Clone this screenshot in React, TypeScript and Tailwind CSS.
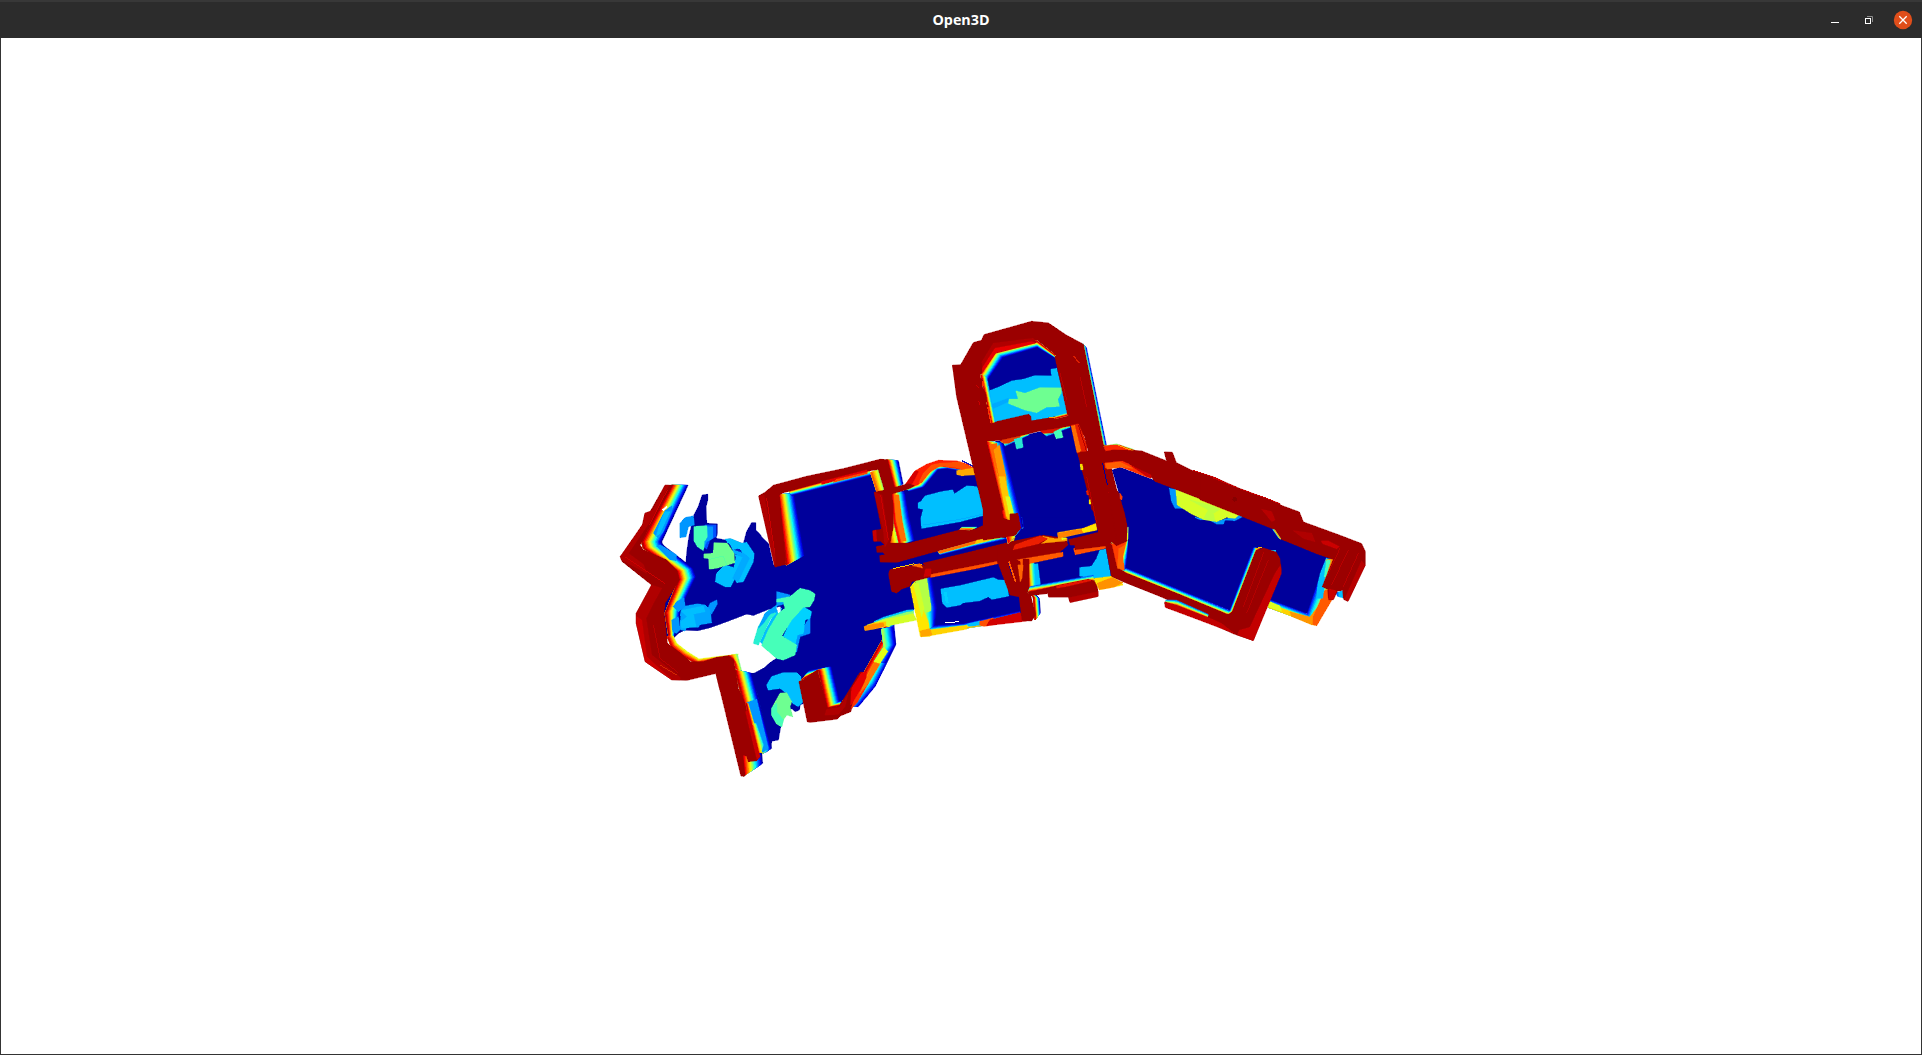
import type { ReactNode } from 'react';

type Pt = [number, number];
const parse = (s: string): Pt[] => s.trim().split(/\s+/).map((p) => p.split(',').map(Number) as Pt);

const clamp = (v: number) => Math.max(0, Math.min(1, v));
const jet = (v: number) => {
  const c = [3, 2, 1].map((k) => Math.round(255 * clamp(1.5 - Math.abs(4 * v - k))));
  return `rgb(${c.join(',')})`;
};

const RED = '#9b0000';
const MID = '#b00000';
const LIT = '#cb0000';
const NAVY = '#00009b';
const SKY = '#00bfff';
const AZURE = '#0096ff';
const AQUA = '#46ffb9';
const MINT = '#6eff91';

/** Filled region of the point cloud. */
const P = ({ c = RED, p }: { c?: string; p: string }) => (
  <polygon fill={c} stroke={c} strokeWidth={2} strokeLinejoin="round" points={p} />
);

/** Thin streak between voxel rows. */
const L = ({ c = LIT, p, w = 3 }: { c?: string; p: string; w?: number }) => (
  <polyline fill="none" stroke={c} strokeWidth={w} points={p} />
);

/** Height gradient swept from polyline a to polyline b. */
const Ramp = ({ a, b, from = 0.95, to = 0.03, n = 14 }: { a: string; b: string; from?: number; to?: number; n?: number }) => {
  const A = parse(a);
  const B = parse(b);
  return (
    <g strokeWidth={2} strokeLinejoin="round">
      {Array.from({ length: n }, (_, i) => {
        const t = 1 - i / n;
        const edge = A.map(([x, y], k) => [x + (B[k][0] - x) * t, y + (B[k][1] - y) * t]).reverse();
        const pts = [...A, ...edge].map((q) => q.join(',')).join(' ');
        const c = jet(from + (to - from) * ((n - 1 - i) / (n - 1)));
        return <polygon key={i} fill={c} stroke={c} points={pts} />;
      })}
    </g>
  );
};

const Tile = ({ x, y, children }: { x: number; y: number; children: ReactNode }) => (
  <g transform={`translate(${x} ${y}) scale(0.33333)`}>{children}</g>
);

const Cloud = () => (
  <svg className="block h-full w-full" viewBox="1 38 1920 1016" shapeRendering="crispEdges">
    {/* open floor */}
    <Tile x={740} y={440}>
      <P c={NAVY} p="-162,375 -160,340 -153,290 -138,225 -125,200 -113,165 -97,163 -97,180 -102,200 -100,250 -68,252 -68,280 -72,295 -45,300 -30,297 10,312 20,275 35,248 47,248 47,270 58,280 66,292 85,310 100,375 190,345 150,160 390,105 410,110 430,320 600,330 600,400 520,510 440,530 400,560 460,570 467,610 430,690 380,770 300,790 200,785 180,795 178,810 165,815 155,805 130,835 122,860 115,900 95,903 93,925 80,935 60,930 -10,705 40,700 110,655 60,560 -250,600 -220,420" />
    </Tile>
    <Tile x={960} y={470}>
      <P c={NAVY} p="-190,75 -150,50 -110,35 -65,-8 -10,-10 40,5 55,20 40,-60 150,-80 350,-100 450,100 600,60 600,335 455,315 415,340 210,365 215,432 -85,478 -140,340 -245,270" />
    </Tile>

    {/* west bay */}
    <Tile x={610} y={470}>
      <P c="#ffffff" p="187,509 205,492 225,482 262,484 300,475 350,457 410,434 430,438 475,420 488,418 495,430 440,525 458,533 480,550 495,562 465,590 435,607 420,608 418,613 395,615 385,560 340,560 260,575 190,530" />
      <P c="#00bfff" p="498,425 515,415 500,460 460,525 450,515 480,455" />
      <P c={AZURE} p="210,160 225,143 250,138 253,165 235,170 228,200 210,203" />
      <P c="#0050ff" p="285,165 318,165 318,200 300,210 290,237 280,230" />
      <P c={AZURE} p="285,170 308,170 308,205 290,215 280,238 270,225" />
      <P c={AQUA} p="252,170 290,167 292,200 283,215 280,242 262,230 252,212" />
      <P c={SKY} p="345,208 362,206 395,220 410,217 432,250 430,275 400,335 380,338 375,325 362,350 345,350 316,335 320,310 345,285 372,293 378,262 362,225" />
      <P c="#0a1cc0" p="372,240 390,236 398,256 372,252" />
      <P c="#00aaff" p="384,335 420,262 400,250 370,240 366,246 398,262 368,325" />
      <L c={SKY} p="352,212 400,238 422,262" w={10} />
      <P c={MINT} p="312,218 352,220 372,250 374,278 345,287 318,295 298,297 296,266 282,264 282,252 310,250" />
      <L c="#5aff9f" p="300,268 340,258 350,285" />
      <P c={AZURE} p="300,400 320,390 322,402 305,432 290,425" />
      <P c="#00a5ff" p="205,412 262,402 285,405 300,420 305,458 270,464 265,472 230,470 225,483 210,478 212,440" />
      <P c={SKY} p="212,422 280,408 285,425 250,432 258,470 215,475 212,455 232,440" />
      <P c={AZURE} p="500,365 540,375 530,400 500,408" />
      <P c={AZURE} p="530,520 575,480 600,440 600,490 570,500 560,545 545,550" />
      <P c="#00d2ff" p="520,500 545,445 580,410 605,425 600,445 585,450 580,490 562,495 555,525" />
      <P c={AQUA} p="540,380 570,355 600,362 615,372 612,390 600,410 580,412 545,450 515,498 560,525 555,555 520,570 500,565 455,527 475,480 505,430 525,415 520,395 500,396 500,388" />
      <P c="#28f0d2" p="430,520 445,470 475,420 498,430 480,450 445,525" />
      <P c="#00a5ff" p="445,475 465,430 500,405 500,425 480,432 460,460" />
      <P c="#ffffff" p="500,413 511,411 511,424 505,428" />

      <Ramp a="185,46 95,215 100,235 200,305 205,330 165,430 180,520" b="234,46 155,216 160,226 250,295 259,320 215,410 190,505" />
      <P c={AZURE} p="165,122 185,108 185,125 160,185 145,205 130,190" />
      <P c="#00bfff" p="150,160 165,125 180,125 150,190 138,200" />
      <P c="#ffffff" p="157,118 170,109 171,113 160,122" />
      <P c={AZURE} p="140,228 152,225 200,255 198,272 178,268" />
      <P c={AZURE} p="200,395 222,383 225,410 205,425 190,410" />
      <P c={AZURE} p="185,450 205,440 210,480 200,490 188,485" />
      <Ramp a="172,500 185,532 215,557 262,582 320,568 370,566" b="190,498 200,520 232,545 267,567 330,559 385,553" from={0.92} to={0.6} n={5} />
      <P p="165,46 187,46 105,195 90,225 100,240 170,270 200,300 208,330 165,400 162,430 172,520 215,552 240,575 280,575 320,562 365,562 340,660 330,660 318,610 230,631 185,629 106,575 79,460 79,430 125,345 36,274 31,260 96,170 105,130 120,126" />
      <P c={MID} p="165,46 176,46 130,140 55,250 100,283 110,310 36,270 31,260 100,160 105,130 130,120" />
      <P c={MID} p="125,345 155,355 130,400 108,445 125,555 210,622 210,629 185,629 106,575 79,460 79,430" />
      <P c={LIT} p="80,440 95,450 110,560 140,588 185,628 107,575 80,460" />
      <L p="172,60 118,165" />
      <L p="45,260 165,340" />
      <L p="130,465 150,565 205,608" c="#b80000" />
      <L p="150,585 200,615" c="#e03c00" w={2} />
    </Tile>

    {/* south leg */}
    <Tile x={610} y={640}>
      <P c="#0078ff" p="400,105 418,103 440,160 480,320 470,335 450,335 430,240" />
      <P c={SKY} p="470,135 485,110 520,98 560,98 572,110 580,185 565,200 548,190 530,160 510,145 475,150" />
      <P c={MINT} p="485,205 510,160 530,158 545,185 540,200 548,230 530,225 520,240 515,260 500,252 485,225" />
      <P c={AQUA} p="485,205 500,190 500,215 520,240 515,260 500,250 485,225" />
      <Ramp a="355,48 370,55 440,350" b="382,42 398,105 412,182" from={0.9} to={0.5} n={6} />
      <Ramp a="375,90 440,350" b="425,100 485,325" />
      <P c={AZURE} p="410,188 440,178 475,325 458,338 450,280 425,248" />
      <Ramp a="408,190 440,350" b="414,190 452,318" from={0.95} to={0.65} n={5} />
      <Ramp a="425,255 445,355" b="438,250 460,315" from={0.85} to={0.4} n={6} />
      <Ramp a="395,345 400,408" b="455,340 458,370" />
      <P p="318,100 325,52 355,47 370,58 385,145 405,190 432,320 450,350 440,362 415,365 410,348 398,345 405,408 393,408" />
      <P c={LIT} p="407,215 414,213 450,350 441,358" />
      <Ramp a="575,120 625,90 650,205 690,197" b="600,90 665,80 690,185 692,183" />
      <P p="567,125 580,120 622,90 652,205 690,198 750,97 768,97 745,150 722,215 690,228 682,237 600,247 592,245" />
      <Ramp a="690,195 762,98 820,-5 825,-60" b="745,200 795,140 857,15 850,-70" from={0.93} to={0.08} />
      <P c="#ff3200" p="715,215 740,190 775,130 768,105 740,150" />
      <P p="690,195 725,140 745,105 735,160 720,213 690,225 680,205" />
      <P c="#e60000" p="725,145 755,98 770,97 765,125 735,175 722,195" />
      <P c="#ff7300" p="767,120 800,55 815,50 808,75 775,130 750,160" />
      <P c={MID} p="650,208 690,202 713,165 705,200 685,223 645,225" />
    </Tile>

    {/* main hall */}
    <Tile x={740} y={440}>
      <Ramp a="112,165 138,375" b="163,160 195,345" />
      <Ramp a="145,150 385,85" b="155,166 392,107" from={0.97} />
      <Ramp a="392,98 412,160" b="418,88 434,150" from={0.78} to={0.5} n={6} />
      <Ramp a="440,60 462,145" b="475,62 489,132" />
      <P p="56,168 75,157 100,136 200,109 310,86 420,58 442,59 464,148 435,155 415,88 385,93 250,125 130,158 118,165 137,373 105,381" />
      <P c="#e60000" p="245,125 380,90 382,97 245,133" />
      <P c="#ff4600" p="290,118 380,97 382,101 280,127" />
      <L p="80,175 105,345" />
      <P c={MID} p="58,170 72,165 106,355 104,378" />
      <Ramp a="435,240 450,320" b="480,240 490,312" from={0.85} to={0.3} />
      <Ramp a="455,160 463,250 478,312" b="495,155 508,225 525,300" from={0.88} />
      <P c="#ff6e00" p="463,165 476,165 486,240 498,302 486,304 468,235" />
      {/* diagonal arm */}
      <P c="#00c8ff" p="402,545 430,532 500,511 520,509 520,520 420,545" />
      <P c="#8cff6e" p="400,550 430,537 500,517 520,514 520,522 420,550" />
      <P c="#d2ff28" p="382,555 430,540 520,521 530,540 440,558" />
      <P c="#ffc800" p="373,560 400,550 437,545 437,559 400,567 375,571" />
      <P c="#ff8c00" p="373,560 398,553 430,549 432,559 400,567 375,571" />
      <Ramp a="425,568 432,620 405,662" b="460,560 467,612 438,668" from={0.55} to={0.05} />
      <P c="#e6ff14" p="432,622 443,635 420,670 402,665" />
    </Tile>

    {/* twin bedrooms */}
    <Tile x={860} y={440}>
      <P c={SKY} p="183,185 195,168 245,155 278,150 283,162 320,138 350,140 365,170 375,225 300,245 185,265 183,235 190,207 175,205 175,188" />
      <L c="#00aeff" p="190,255 300,238 370,222" />
      <L c="#1414c0" p="305,62 342,80" w={4} />
      <Ramp a="135,143 172,130 218,78 260,70 340,84" b="150,153 192,141 236,88 262,86 345,100" from={0.9} />
      <P c="#ff1e00" p="136,134 165,93 200,73 235,61 290,63 322,73 345,88 345,96 290,86 240,78 215,86 175,133 150,143" />
      <P c="#ff5000" p="215,75 240,70 300,66 342,85 342,95 285,82 240,78 210,96 185,128 177,128 190,100" />
      <P c="#ffaa00" p="290,92 345,84 345,104 305,107 290,103" />
      <P c="#d70000" p="136,134 165,93 175,95 160,125 150,140" />
      <P p="43,157 80,149 145,131 163,137 150,145 95,162 100,200 100,260 90,310 145,310 230,288 310,267 345,268 385,250 325,0 385,0 435,245 450,243 450,221 474,219 482,265 465,288 350,304 210,339 110,367 61,366 59,347 75,345 70,337 51,337 49,320 75,315 62,304 41,304 38,272 65,268" />
      <P c={MID} p="43,158 66,165 86,300 75,320 70,270" />
      <L p="62,165 85,300" />
      <P c={LIT} p="39,273 48,271 50,303 42,303" />
      <Ramp a="474,218 482,265" b="484,218 491,264" from={0.8} to={0.1} n={4} />
      <Ramp a="300,268 330,269" b="305,262 350,262" from={0.8} to={0.4} n={4} />
      <P c={NAVY} p="110,375 220,347 350,317 440,293 445,306 350,330 190,370 130,380" />
      <Ramp a="235,335 350,304 400,290" b="240,344 350,316 440,296" from={0.85} to={0.15} n={6} />
      <P c="#ff6e00" p="235,335 350,302 350,309 240,340" />
      <P c="#ffc800" p="350,301 400,293 385,302 345,311" />
      <P c="#ffbe00" p="440,291 465,291 460,304 443,305" />
      {/* second room */}
      <P c={SKY} p="243,447 300,437 400,413 415,420 440,422 446,468 395,478 385,470 360,482 310,488 300,495 260,502 248,490" />
      <L c="#00cfff" p="255,455 262,490" w={8} />
      <Ramp a="170,410 185,515 197,580" b="214,408 230,503 224,556" from={0.66} to={0.05} n={12} />
      <P c="#b4ff46" p="165,420 200,413 213,500 212,513 190,520" />
      <P c="#ffe600" p="151,441 165,425 185,500 205,545 210,589 181,589" />
      <P c="#d2ff28" p="160,430 175,430 192,505 185,530" />
      <Ramp a="185,585 320,564 480,538" b="225,557 310,552 480,514" from={0.7} to={0.1} n={8} />
      <P c="#ffd200" p="190,572 320,556 321,567 210,587 183,590" />
      <P c="#ffa500" p="181,573 210,566 216,585 183,590" />
      <P c={SKY} p="322,552 360,543 362,555 326,559" />
      <P c="#ff5000" p="359,545 400,534 400,554 372,559 359,555" />
      <P c="#d20000" p="390,540 480,518 500,543 380,557" />
      <L c="#ffffff" p="255,548 275,547 298,545" w={3} />
      <Ramp a="505,460 520,470 525,540" b="525,462 538,475 541,518" />
      {/* corridor wall */}
      <P p="86,402 90,389 150,378 185,374 215,387 190,370 350,331 455,305 550,286 600,293 600,345 480,355 350,385 210,411 155,425 150,438 125,447 110,459 95,454" />
      <L c="#ffc800" p="100,386 160,372 185,374" />
      <P c="#ff6e00" p="157,377 180,371 188,384 172,380" />
      <P c="#ff5000" p="212,399 350,371 410,359 412,371 350,385 212,412" />
      <P p="190,370 415,320 415,362 212,402" />
      <P c={LIT} p="197,387 213,387 211,408 192,410" />
      <P p="411,360 435,356 470,450 486,355 505,345 505,440 520,500 527,522 515,542 490,542 478,470 450,464" />
      <L c="#d20000" p="447,360 472,440" w={7} />
      <L c="#ff5000" p="483,365 477,415" w={6} />
    </Tile>

    {/* north tower and lobby */}
    <Tile x={940} y={310}>
      <P p="38,166 60,168 100,98 125,91 132,74 275,34 325,39 380,76 427,101 494,405 420,432 455,600 555,600 540,570 495,450 400,340 145,395 190,600 130,600 50,260" />
      <P c={NAVY} p="130,205 185,145 290,105 345,140 365,230 140,245" />
      <P c={NAVY} p="165,395 395,345 458,620 235,620" />
      <P c={SKY} p="142,245 180,230 215,213 250,208 285,197 335,198 333,178 350,175 385,312 160,350" />
      <P c="#00aaff" p="150,285 205,265 205,275 150,300" />
      <P c={MINT} p="228,243 255,250 300,233 365,234 363,250 353,268 358,289 320,291 290,308 255,300 205,280 208,268 235,268" />
      <Ramp a="120,190 160,120 290,92 345,135" b="145,208 190,143 292,112 345,143" from={0.93} />
      <P c={MID} p="105,190 160,100 280,85 290,97 165,130 123,190" />
      <P c="#e60000" p="120,185 165,115 275,95 285,99 168,128 127,188" />
      <Ramp a="122,195 155,345" b="140,200 167,340" from={0.9} to={0.3} n={5} />
      <P p="38,166 125,160 125,190 108,198 128,210 124,228 112,232 130,235 138,255 140,275 115,278 143,285 143,300 125,305 147,320 154,345 100,370" />
      <L p="130,212 130,228" c="#ff3200" w={5} />
      <L p="143,290 153,340" c="#ff3200" w={4} />
      <L p="108,225 118,235" /><L p="115,272 120,285" />
      <Ramp a="180,390 260,368" b="195,408 268,374" from={0.9} to={0.3} n={6} />
      <P c="#e63c00" p="185,388 245,372 240,382 205,400 190,400" />
      <Ramp a="300,360 385,342" b="320,378 390,352" from={0.9} to={0.3} n={6} />
      <P c="#dc1400" p="297,360 375,345 345,368 310,370" />
      <P p="130,352 170,335 265,313 272,318 274,335 345,326 430,306 440,340 300,362 270,370 180,390 130,395" />
      <L c="#ffa000" p="328,323 345,322" w={4} />
      <Ramp a="345,326 384,316" b="345,320 382,310" from={0.9} to={0.5} n={3} />
      <P c="#28e6d2" p="223,388 245,382 249,412 230,417" />
      <P c={AQUA} p="341,366 362,356 369,382 349,386" />
      <Ramp a="140,395 193,640 205,700" b="190,400 240,600 249,650" from={0.88} />
      <P c="#ff6400" p="148,405 170,400 185,470 188,540" />
      <P c="#ff9600" p="162,420 178,405 198,500 203,600 188,550" />
      <P c="#ffc800" p="178,500 194,500 214,600 210,628 200,620" />
      <P c="#dcff1e" p="197,560 208,560 224,622 212,630" />
      <P p="38,166 100,290 140,395 190,600 135,620 100,450 92,400 52,262" />
      <P p="190,625 210,632 210,612 234,610 242,654 226,676 130,690 130,600 185,600" />
      <Ramp a="428,102 490,408" b="439,112 499,405" from={0.55} to={0.1} n={4} />
      <P c="#e61e00" p="394,346 415,342 440,400 440,425 412,430" />
      <P c="#ff6e00" p="394,349 404,346 423,424 411,427" />
      <P p="345,140 430,102 490,405 580,420 600,425 600,460 510,460 545,600 458,600 413,430 445,425 425,340 383,315" />
      <L p="400,138 418,158" c="#dc1e00" w={4} />
      <L c="#b80000" p="415,345 440,425" /><L c="#b80000" p="360,190 380,270" /><L c="#b80000" p="420,200 440,290" />
      <Ramp a="492,410 525,410 580,422" b="492,408 530,402 580,418" from={0.95} to={0.5} n={3} />
      <P c="#ff2d00" p="493,409 540,406 573,420 520,425 500,431" />
      <P c="#f5dc00" p="421,463 427,463 429,479 422,479" />
    </Tile>

    {/* centre junction */}
    <Tile x={960} y={470}>
      <P c={SKY} p="359,293 395,289 410,265 420,240 437,238 452,320 400,325 359,318" />
      <P c={SKY} p="215,285 233,281 241,343 220,350" />
      <Ramp a="195,280 205,360" b="222,278 225,345" from={0.9} to={0.35} n={6} />
      <P c="#ffb400" p="293,188 370,175 408,160 411,180 325,198 296,206" />
      <P c="#ff8200" p="293,191 340,181 370,179 371,187 320,199 296,204" />
      <P c="#ffe600" p="366,178 407,163 409,179 370,187" />
      <P c="#ffa000" p="205,215 250,199 285,206 321,204 321,215 260,225" />
      <P p="140,240 160,215 240,198 260,208 240,222 320,214 324,225 300,245 190,268 150,275 120,268" />
      <P c="#eb1e00" p="200,212 240,198 262,206 235,221 160,239 165,225" />
      <P c="#ff5a00" p="170,270 308,247 309,259 215,279 175,289" />
      <P c="#ff5000" p="341,236 440,215 440,234 346,254" />
      <P c="#e6ff14" p="305,205 318,204 318,207 306,209" />
      <P p="326,209 380,196 430,183 450,178 455,225 345,239 345,225 331,225" />
      {/* posts */}
      <P p="119,265 140,262 160,345 150,260 180,275 188,330 190,268 207,268 207,350 220,430 226,435 215,452 186,451 178,380 150,374" />
      <L c="#ff5a00" p="147,275 167,335" w={5} />
      <P c="#ff6400" p="174,285 189,285 186,323 181,335" />
      {/* lower shelf */}
      <Ramp a="205,368 400,335" b="210,350 400,316" from={0.95} to={0.2} n={7} />
      <P p="206,368 300,345 385,328 411,336 414,379 330,397 325,380 266,381 264,370 210,377" />
      <P c="#e61400" p="290,348 385,329 393,332 320,349 290,354" />
      <P c="#b40000" p="326,377 414,363 414,379 331,397" />
      <P p="265,367 410,337 411,364 330,381 266,380" />
      <P c="#ffe100" p="401,326 455,319 480,335 489,345 460,351 418,359" />
      <P c="#ff9100" p="412,340 455,323 489,338 462,351 418,359" />
      {/* right column */}
      <Ramp a="455,215 500,200 470,305 600,365" b="460,225 508,200 495,298 600,335" from={0.85} to={0.15} n={7} />
      <P c="#ff6400" p="450,222 498,216 488,260 493,300 455,310" />
      <P c="#ff3c00" p="448,225 498,211 493,225 475,235 470,300 455,305" />
      <P p="435,215 455,225 472,300 500,309 600,352 600,377 488,334 455,319" />
      <P p="370,0 455,0 465,61 484,69 502,175 501,213 470,227 415,185" />
      <P c="#ff3c00" p="481,69 487,76 487,87 483,89" />
      <P c="#e61e00" p="379,63 384,61 386,74 381,74" />
      <P c="#ffe600" p="388,89 391,89 392,102 388,102" />
      <L c="#d20000" p="430,10 445,70" /><L c="#b80000" p="412,40 430,130" /><L c="#b80000" p="380,20 410,160" />
      <L c={NAVY} p="428,0 440,52" w={2} />
      <Ramp a="503,172 502,210" b="508,172 507,210" from={0.6} to={0.2} n={2} />
    </Tile>

    {/* east wing */}
    <Tile x={1080} y={430}>
      <P c={NAVY} p="97,120 120,112 220,150 590,295 760,350 720,560 560,520 525,354 455,543 142,418 147,290" />
      <P c={AZURE} p="268,175 295,180 320,235 285,235 275,215" />
      <P c={AZURE} p="345,262 380,268 410,275 480,255 488,260 465,272 435,270 430,282 410,282 385,268 360,269" />
      <P c="#d7ff28" p="288,178 330,195 480,252 465,265 440,262 410,275 370,268 335,252 292,225" />
      <P c="#beff41" p="330,210 400,228 420,238 400,250 405,272 370,268 385,240" />
      <P c="#ff3200" p="73,91 120,91 220,131 213,144 195,139 125,111 76,114" />
      <P c="#ff5f00" p="76,101 120,96 158,115 125,111 81,117" />
      <P c="#ff2800" p="73,56 90,46 120,46 158,62 90,68" />
      <L c="#ffa000" p="115,46 162,64" />
      <P p="0,66 70,66 100,60 185,63 260,93 253,66 277,67 289,98 335,121 400,141 480,176 600,221 600,304 470,249 270,171 225,154 213,140 130,91 70,98 110,330 70,320 40,200" />
      <P c={LIT} p="155,108 213,135 213,144 200,139" />
      <L c={LIT} p="340,121 400,141 430,155" /><L c={LIT} p="480,177 560,205 600,222" />
      <P c="#b80000" p="480,210 500,215 540,245 525,245 490,230" />
      <P c="#a80000" p="395,205 440,212 480,235 440,230" />
      <P c="#b80000" p="545,256 600,276 600,300 550,270" />
      <L c={NAVY} p="68,100 82,165" w={3} />
      <P c="#ff3c00" p="119,189 127,200 125,209 121,207" />
      {/* south wall of the wing */}
      <Ramp a="130,432 440,560 460,548 540,358" b="138,415 450,542 450,542 521,353" from={0.95} to={0.15} n={8} />
      <P p="100,415 120,418 140,430 300,494 440,552 457,555 540,357 589,368 596,400 575,450 505,600 519,631 460,611 390,579 330,539 240,499 140,459 96,439" />
      <Ramp a="255,522 290,530 380,565" b="258,510 290,511 385,553" from={0.9} to={0.25} n={5} />
      <P c="#c30000" p="254,516 290,526 385,563 470,600 519,631 440,601 350,567 256,532" />
    </Tile>

    {/* east end */}
    <Tile x={1200} y={470}>
      <Ramp a="205,412 345,463 400,350" b="210,390 322,432 380,262" from={0.7} to={0.15} n={9} />
      <P c="#ffd200" p="206,401 320,441 340,455 344,466 206,411" />
      <P c="#ff9600" p="270,426 330,441 350,415 360,430 350,464 335,464 275,439" />
      <P c="#ff5a00" p="340,440 375,360 400,360 400,382 350,467 339,463" />
      <P c="#e1ff1e" p="206,394 240,408 245,424 206,411" />
      <P c={SKY} p="353,345 361,310 379,265 392,268 375,330 368,385 350,385" />
      <P c={SKY} p="409,369 429,361 431,384 418,381" />
      <P c="#0064ff" p="407,369 414,366 415,381" />
      <P c="#ff9600" p="378,269 401,266 385,345 372,345 382,300" />
      <P c={AQUA} p="380,269 391,272 378,320 373,320" />
      <P p="0,9 115,56 175,81 298,126 310,156 420,196 485,221 496,245 496,285 444,394 431,388 428,361 412,363 400,389 386,389 383,358 367,350 400,268 350,251 240,206 225,179 100,129 0,89" />
      <Ramp a="224,180 242,207" b="218,178 236,204" from={0.7} to={0.3} n={3} />
      <P c="#b80000" p="185,118 215,125 225,150 215,155 195,130" />
      <P c="#b00000" p="280,182 335,190 345,215 310,205" />
      <P c={LIT} p="364,213 385,213 418,230 410,236 368,221" />
      <P c="#b80000" p="485,272 495,286 444,393 434,388" />
      <P c={LIT} p="387,357 409,363 400,388 387,388" />
      <L c="#b80000" p="445,240 395,345" /><L c="#b80000" p="475,250 430,350" /><L c="#b80000" p="420,235 380,320" />
      <L c="#c80000" p="40,24 110,52" />
      <circle cx="104" cy="88" r="7" fill="#870000" />
      <L c="#ffb400" p="165,236 185,231" /><L c={SKY} p="195,240 228,243" w={4} />
      <P p="168,241 190,234 228,246 239,265 244,300 160,511 110,494 60,455 97,425" />
      <P c="#c30000" p="241,287 244,310 160,511 113,494 118,481 150,472 225,311" />
      <L c="#b40000" p="192,245 130,410" /><L c="#b40000" p="205,270 140,430" />
    </Tile>
  </svg>
);

export default function App() {
  return (
    <div className="flex h-[1055px] w-[1922px] flex-col overflow-hidden bg-[#343434]">
      <header className="grid h-[38px] shrink-0 grid-cols-[1fr_auto_1fr] items-center border-t-2 border-[#383838] bg-[#2c2c2c]">
        <span />
        <h1 className="font-['Open_Sans','Noto_Sans',sans-serif] text-[14.3px] leading-none font-bold text-white">Open3D</h1>
        <div className="flex items-center justify-end pr-[9px]">
          <svg className="h-5 w-[90px]" viewBox="1823 9 90 20">
            <path d="M1831 21.5h8" stroke="#fff" />
            <path d="M1867 15.5h5.5v5.5" fill="none" stroke="#8c8c8c" />
            <rect x="1865.5" y="17.5" width="5" height="5" fill="none" stroke="#fff" />
            <circle cx="1903" cy="19" r="9.2" fill="#e04e1a" />
            <path d="m1899.3 15.3 7.4 7.4m0-7.4-7.4 7.4" stroke="#fff" strokeWidth="1.3" />
          </svg>
        </div>
      </header>
      <main className="mx-px mb-px min-h-0 flex-1 bg-white">
        <Cloud />
      </main>
    </div>
  );
}
